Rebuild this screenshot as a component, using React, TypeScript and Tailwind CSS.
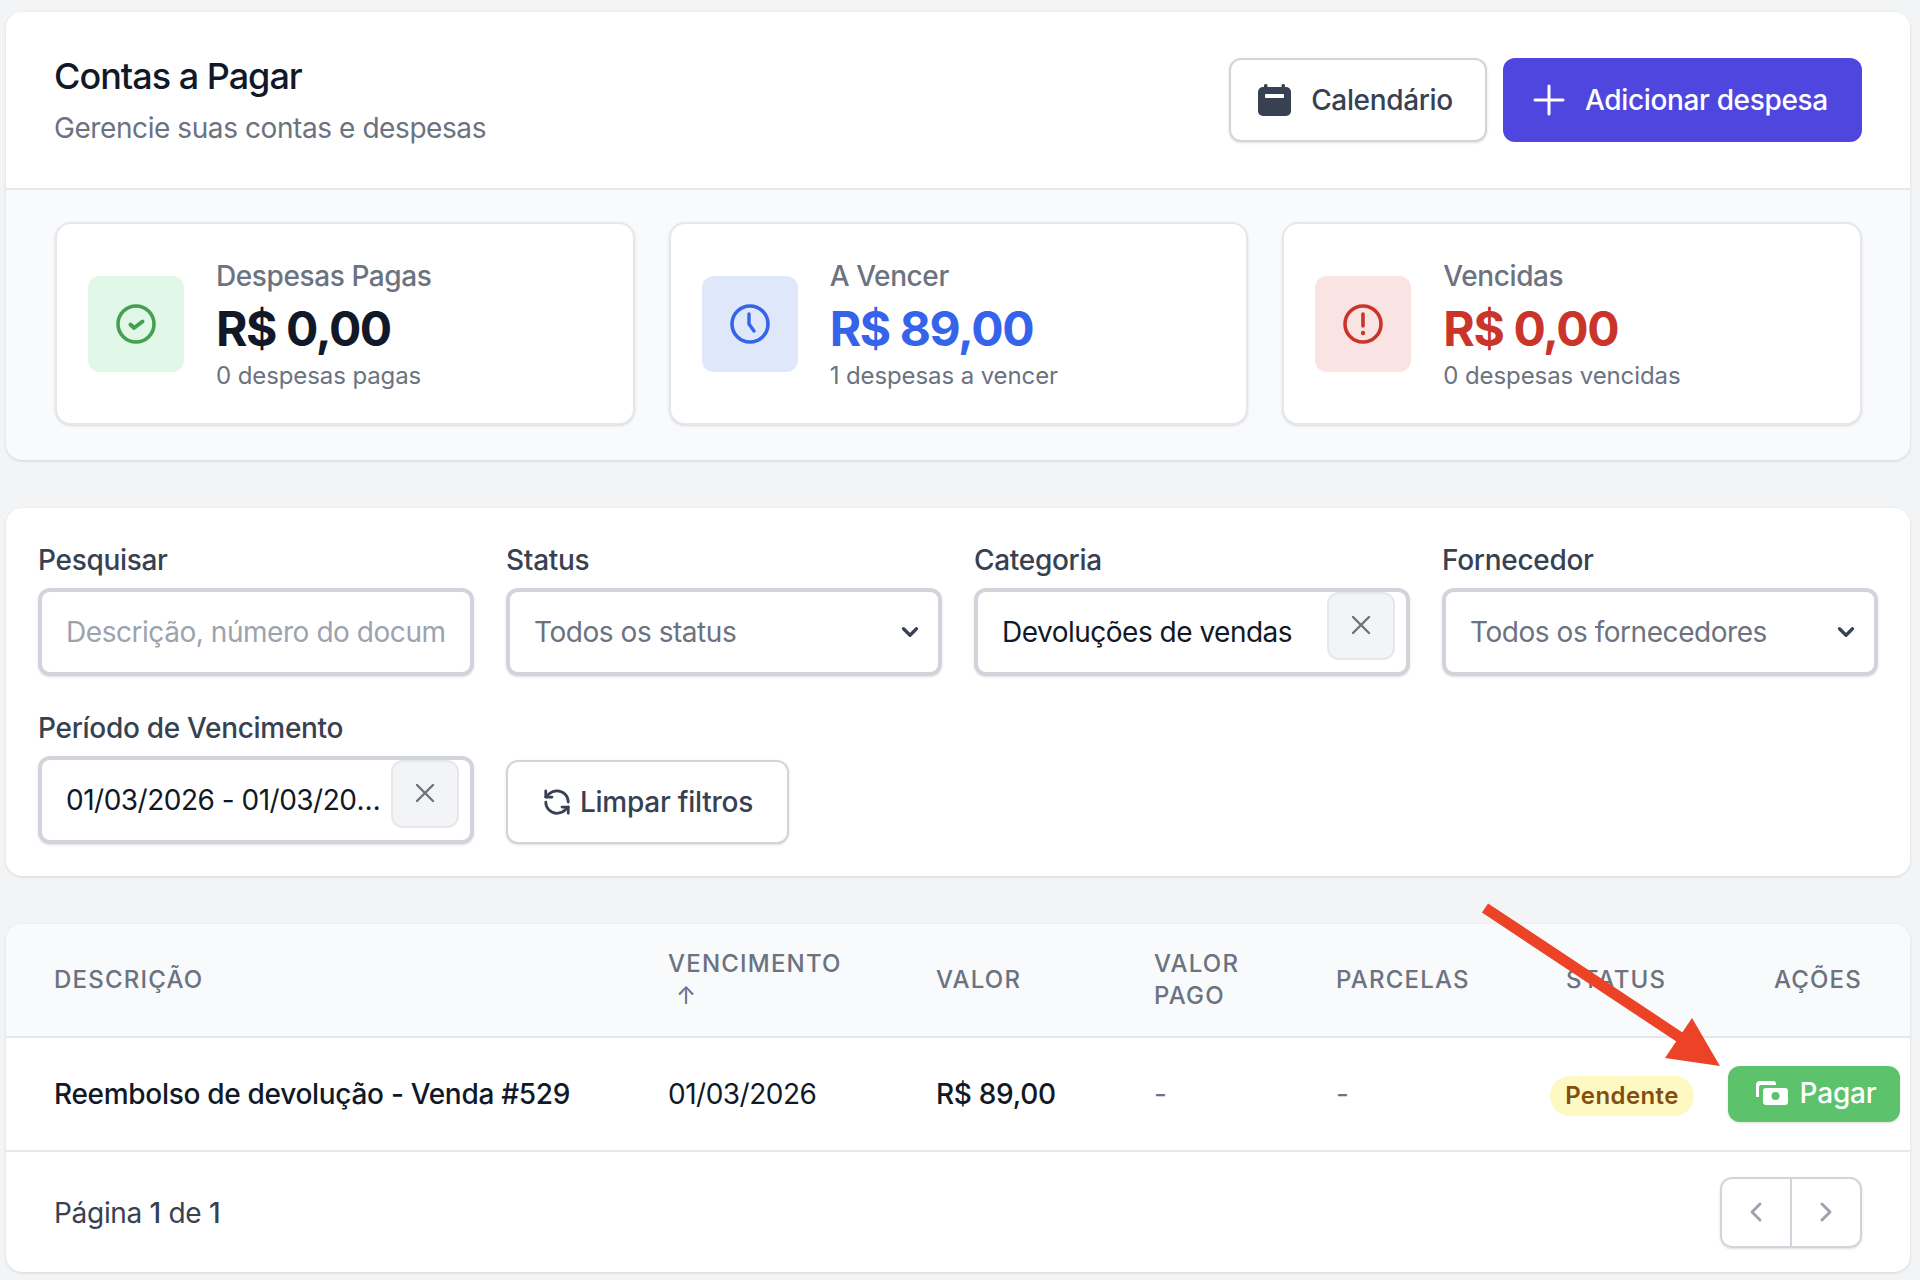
import React from "react";
import { ChevronDown, ChevronLeft, ChevronRight, X, Plus, RefreshCcw } from "lucide-react";

function CalendarIcon() {
  return (
    <svg viewBox="0 0 33 32" className="w-[33px] h-[32px] text-[#374151]" fill="currentColor">
      <rect x="0" y="3" width="33" height="29" rx="5" />
      <rect x="6" y="0" width="3.500" height="6" rx="1.500" />
      <rect x="23.500" y="0" width="3.500" height="6" rx="1.500" />
      <rect x="7" y="10" width="19" height="4" rx="1" fill="#fff" />
    </svg>
  );
}

function CheckIcon() {
  return (
    <svg viewBox="0 0 40 40" className="w-10 h-10" fill="none" stroke="currentColor">
      <circle cx="20" cy="20" r="18" strokeWidth="3.6" />
      <path d="M14.500 20.500l3.500 3.500 8.500-6.500" strokeWidth="4" strokeLinecap="round" strokeLinejoin="round" />
    </svg>
  );
}

function ClockIcon() {
  return (
    <svg viewBox="0 0 40 40" className="w-10 h-10" fill="none" stroke="currentColor">
      <circle cx="20" cy="20" r="18" strokeWidth="3.6" />
      <path d="M19 10v10l5 7" strokeWidth="3.4" strokeLinecap="round" strokeLinejoin="round" />
    </svg>
  );
}

function AlertIcon() {
  return (
    <svg viewBox="0 0 40 40" className="w-10 h-10" fill="none" stroke="currentColor">
      <circle cx="20" cy="20" r="18" strokeWidth="3.6" />
      <path d="M20 10v12" strokeWidth="3.6" strokeLinecap="round" />
      <circle cx="20" cy="29" r="2.200" fill="currentColor" stroke="none" />
    </svg>
  );
}

function CashIcon() {
  return (
    <svg viewBox="0 0 32 24" className="w-8 h-6" fill="currentColor">
      <path d="M0 16V4a4 4 0 0 1 4-4h13a3 3 0 0 1 3 3v1H5a2 2 0 0 0-2 2v10H0z" />
      <path fillRule="evenodd" d="M10 7h19a3 3 0 0 1 3 3v11a3 3 0 0 1-3 3H10a3 3 0 0 1-3-3V10a3 3 0 0 1 3-3zm9.500 12a4 4 0 1 0 0-8 4 4 0 0 0 0 8z" />
    </svg>
  );
}

const stats = [
  { label: "Despesas Pagas", value: "R$ 0,00", sub: "0 despesas pagas", box: "bg-[#e1f8e8]", icon: "text-[#43a04f]", color: "text-[#111827]", Icon: CheckIcon },
  { label: "A Vencer", value: "R$ 89,00", sub: "1 despesas a vencer", box: "bg-[#dfe8fb]", icon: "text-[#3563e9]", color: "text-[#3563e9]", Icon: ClockIcon },
  { label: "Vencidas", value: "R$ 0,00", sub: "0 despesas vencidas", box: "bg-[#f9e3e3]", icon: "text-[#c9352b]", color: "text-[#c9352b]", Icon: AlertIcon },
];

function FieldLabel({ children }: { children: React.ReactNode }) {
  return <div className="text-[28px] leading-[40px] tracking-[-0.3px] font-medium text-[#374151] mb-[8px]">{children}</div>;
}

function SelectField({ label, value }: { label: string; value: string }) {
  return (
    <div>
      <FieldLabel>{label}</FieldLabel>
      <div className="h-[88px] border-4 border-[#d1d5db] rounded-[12px] bg-white flex items-center pl-[24px] pr-[15px] shadow-sm">
        <span className="flex-1 text-[28px] tracking-[-0.45px] text-[#6b7280]">{value}</span>
        <ChevronDown className="w-[26px] h-[26px] text-[#374151]" strokeWidth={3} />
      </div>
    </div>
  );
}

function ClearField({ label, value }: { label: string; value: string }) {
  return (
    <div>
      <FieldLabel>{label}</FieldLabel>
      <div className="h-[88px] border-4 border-[#d1d5db] rounded-[12px] bg-white flex items-start pl-[24px] pr-[11px] shadow-sm">
        <span className="flex-1 min-w-0 self-center truncate text-[28px] tracking-[-0.5px] text-[#111827] pr-[8px]">{value}</span>
        <button className="w-[68px] h-[68px] shrink-0 bg-[#f3f4f6] border-2 border-[#e5e7eb] rounded-[12px] flex items-center justify-center text-[#6b7280]">
          <X className="w-[32px] h-[32px] -translate-y-[1px]" strokeWidth={1.8} />
        </button>
      </div>
    </div>
  );
}

export default function App() {
  return (
    <div className="relative min-h-[1280px] bg-[#f3f4f6] pt-[12px] pl-[6px] pr-[10px] font-['Inter',sans-serif] flex flex-col gap-[48px]">
      <section className="h-[448px] rounded-[16px] bg-[#f9fafb] shadow-[0_1px_3px_rgba(0,0,0,0.14)] overflow-hidden">
        <div className="h-[178px] bg-white border-b-2 border-[#e5e7eb] pl-[48px] pr-[48px] flex items-center justify-between">
          <div className="-mt-[2px]">
            <h1 className="text-[36px] leading-[52px] tracking-[-1px] font-medium text-[#111827]">Contas a Pagar</h1>
            <p className="text-[28px] leading-[40px] tracking-[-0.42px] mt-[6px] text-[#6b7280]">Gerencie suas contas e despesas</p>
          </div>
          <div className="flex gap-[16px]">
            <button className="w-[258px] h-[84px] bg-white border-2 border-[#d1d5db] rounded-[12px] shadow-sm flex items-center justify-center gap-[20px] pr-[5px] text-[28px] tracking-[-0.35px] font-medium text-[#374151]">
              <CalendarIcon />
              Calendário
            </button>
            <button className="w-[359px] h-[84px] bg-[#4f46e0] rounded-[12px] flex items-center pl-[22px] gap-[12px] text-[28px] tracking-[-0.35px] font-medium text-white">
              <Plus className="w-[48px] h-[48px]" strokeWidth={1.5} />
              Adicionar despesa
            </button>
          </div>
        </div>
        <div className="grid grid-cols-3 gap-[34px] pl-[49px] pr-[48px] pt-[32px]">
          {stats.map((s) => (
            <div key={s.label} className="h-[203px] bg-white border-2 border-[#e5e7eb] rounded-[16px] shadow-sm flex items-center pl-[31px] gap-[32px]">
              <div className={`w-[96px] h-[96px] rounded-[12px] flex items-center justify-center ${s.box} ${s.icon}`}>
                <s.Icon />
              </div>
              <div className="pt-[2px]">
                <div className="text-[28px] leading-[40px] tracking-[-0.4px] font-medium text-[#6b7280]">{s.label}</div>
                <div className={`text-[48px] leading-[60px] tracking-[-1.4px] mt-[3px] font-bold ${s.color}`}>{s.value}</div>
                <div className="text-[24px] leading-[36px] tracking-[-0.1px] -mt-[1px] text-[#6b7280]">{s.sub}</div>
              </div>
            </div>
          ))}
        </div>
      </section>

      <section className="h-[368px] rounded-[16px] bg-white shadow-[0_1px_3px_rgba(0,0,0,0.12)] px-[32px] pt-[32px]">
        <div className="grid grid-cols-4 gap-x-[32px] gap-y-[32px]">
          <div>
            <FieldLabel>Pesquisar</FieldLabel>
            <input
              readOnly
              placeholder="Descrição, número do documento"
              className="w-full h-[88px] border-4 border-[#d1d5db] rounded-[12px] bg-white px-[24px] text-[28px] tracking-[-0.45px] placeholder:text-[#9ca3af] outline-none shadow-sm"
            />
          </div>
          <SelectField label="Status" value="Todos os status" />
          <ClearField label="Categoria" value="Devoluções de vendas" />
          <SelectField label="Fornecedor" value="Todos os fornecedores" />
          <ClearField label="Período de Vencimento" value="01/03/2026 - 01/03/2026" />
          <div className="self-end">
            <button className="w-[283px] h-[84px] bg-white border-2 border-[#d1d5db] rounded-[12px] shadow-sm flex items-center justify-center gap-[8px] text-[28px] tracking-[-0.25px] font-medium text-[#374151]">
              <RefreshCcw className="w-[30px] h-[30px]" strokeWidth={2.2} />
              Limpar filtros
            </button>
          </div>
        </div>
      </section>

      <section className="h-[348px] rounded-[16px] bg-white shadow-[0_1px_3px_rgba(0,0,0,0.12)] overflow-hidden">
        <table className="w-full table-fixed border-collapse">
          <colgroup>
            <col className="w-[614px]" />
            <col className="w-[268px]" />
            <col className="w-[217px]" />
            <col className="w-[182px]" />
            <col className="w-[230px]" />
            <col className="w-[195px]" />
            <col className="w-[198px]" />
          </colgroup>
          <thead>
            <tr className="h-[113px] bg-[#f9fafb] border-b-2 border-[#e5e7eb] text-left text-[24px] leading-[32px] font-medium tracking-[0.05em] text-[#6b7280]">
              <th className="font-medium pl-[48px]">DESCRIÇÃO</th>
              <th className="font-medium pl-[48px] pr-[20px]">
                VENCIMENTO
                <span className="block pl-[8px] font-normal tracking-normal">↑</span>
              </th>
              <th className="font-medium pl-[48px]">VALOR</th>
              <th className="font-medium pl-[49px] pr-[20px]">VALOR PAGO</th>
              <th className="font-medium pl-[49px]">PARCELAS</th>
              <th className="font-medium pl-[49px]">STATUS</th>
              <th className="font-medium pr-[48px] text-right">AÇÕES</th>
            </tr>
          </thead>
          <tbody>
            <tr className="h-[114px] border-b-2 border-[#e5e7eb] text-[28px] tracking-[-0.3px] text-[#111827]">
              <td className="pl-[48px] font-medium whitespace-nowrap">Reembolso de devolução - Venda #529</td>
              <td className="pl-[48px] tracking-[-0.5px]">01/03/2026</td>
              <td className="pl-[48px] font-medium">R$ 89,00</td>
              <td className="pl-[49px] text-[#6b7280]">-</td>
              <td className="pl-[49px] text-[#6b7280]">-</td>
              <td className="pl-[33px]">
                <span className="inline-flex items-center justify-center w-[144px] h-[40px] rounded-full bg-[#fef9c3] text-[#854d0e] text-[24px] tracking-[0.4px] font-semibold mt-[4px]">Pendente</span>
              </td>
              <td className="pr-[10px]">
                <button className="ml-auto w-[172px] h-[56px] rounded-[12px] bg-[#5cc26c] shadow-sm flex items-center justify-center gap-[12px] pl-[4px] pb-[2px] text-[28px] font-medium text-white tracking-[-0.2px]">
                  <CashIcon />
                  Pagar
                </button>
              </td>
            </tr>
          </tbody>
        </table>
        <div className="h-[120px] flex items-center justify-between pl-[48px] pr-[48px]">
          <div className="text-[28px] tracking-[-0.3px] text-[#374151] mt-[2px]">
            Página <span className="font-medium">1</span> de <span className="font-medium">1</span>
          </div>
          <div className="w-[142px] h-[71px] flex border-2 border-[#d1d5db] rounded-[12px] shadow-sm divide-x-2 divide-[#d1d5db]">
            <button className="flex-1 flex items-center justify-center text-[#9ca3af]">
              <ChevronLeft className="w-[32px] h-[32px]" strokeWidth={2.2} />
            </button>
            <button className="flex-1 flex items-center justify-center text-[#9ca3af]">
              <ChevronRight className="w-[32px] h-[32px]" strokeWidth={2.2} />
            </button>
          </div>
        </div>
      </section>

      {/* seta de anotação por cima da tabela */}
      <svg className="absolute left-[1480px] top-[900px] pointer-events-none" width="250" height="175" viewBox="1480 900 250 175">
        <line x1="1485" y1="908" x2="1684" y2="1040" stroke="#ec4226" strokeWidth="11" />
        <polygon points="1720,1066 1692,1018 1665,1058" fill="#ec4226" />
      </svg>
    </div>
  );
}
